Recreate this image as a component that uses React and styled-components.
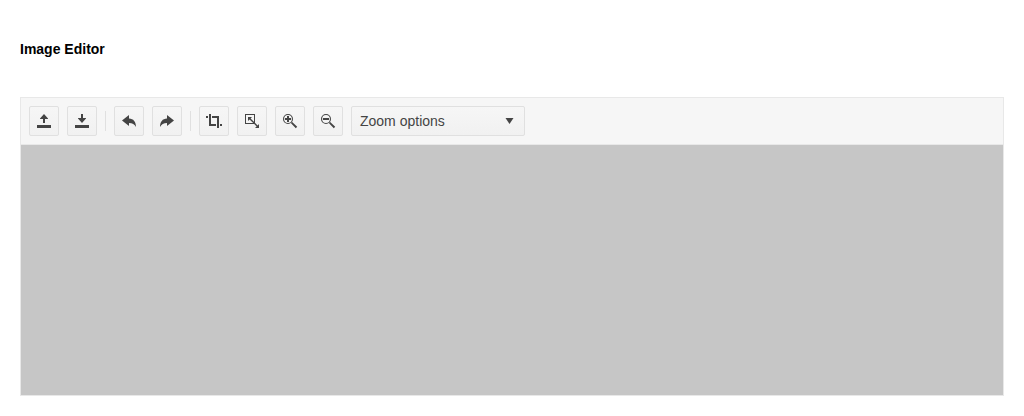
import React from "react";
import styled, { createGlobalStyle } from "styled-components";

const GlobalStyle = createGlobalStyle`
  *, *::before, *::after { box-sizing: border-box; }
  body {
    margin: 0;
    background: #fff;
    color: #000;
    font-family: "Liberation Sans", Arial, sans-serif;
    font-size: 14px;
  }
`;

const Page = styled.main`
  padding: 40px 20px 20px;
`;

const Title = styled.h4`
  margin: 0 0 39px;
  font-size: 14px;
  line-height: 18px;
  font-weight: 700;
`;

const Editor = styled.section`
  border: 1px solid #e8e8e8;
  background: #fff;
`;

const Toolbar = styled.div`
  display: flex;
  align-items: center;
  gap: 8px;
  padding: 8px;
  border-bottom: 1px solid #e8e8e8;
  background: #f6f6f6;
`;

const Button = styled.button`
  display: flex;
  align-items: center;
  justify-content: center;
  width: 30px;
  height: 30px;
  padding: 0;
  border: 1px solid #e0e0e0;
  border-radius: 2px;
  background: linear-gradient(#f6f6f6, #f1f1f1);
  color: #444;
`;

const DropDown = styled(Button)`
  justify-content: space-between;
  width: 174px;
  padding: 0 7px 0 8px;
  font: inherit;
  line-height: 20px;
`;

const Separator = styled.span`
  width: 1px;
  height: 20px;
  background: #e0e0e0;
`;

const Glyph = styled.svg`
  display: block;
  width: 16px;
  height: 16px;
  fill: currentColor;
`;

const Canvas = styled.div`
  height: 250px;
  background: #c6c6c6;
`;

const lens = "M6 1a5 5 0 1 1 0 10A5 5 0 0 1 6 1zM6 2.1a3.9 3.9 0 1 0 0 7.8A3.9 3.9 0 0 0 6 2.1z";
const handle = "M9 10.2L10.2 9 15.2 13.8 13.8 15.2z";

const paths = {
  upload: "M1 12h14v3H1zM8 1l4 4.5V6H9v4H7V6H4v-.5z",
  download: "M1 12h14v3H1zM7 1h2v4h3v.5L8 10 4 5.5V5h3z",
  undo: "M8 2v3.5c4.5 0 7 3.5 7 8.5-1.5-2.7-3.5-4-7-4v3L1 7.5z",
  redo: "M8 2v3.5c-4.5 0-7 3.5-7 8.5 1.5-2.7 3.5-4 7-4v3l7-5.5z",
  crop: "M0 3h2v2H0zM3 1h2v10h5v2H3zM6 3h7v12h-2V5H6zM14 11h2v2h-2z",
  resize:
    "M1 1h10v10H1zM2 2v8h8V2zM4 4h4L6.6 5.4 13.6 12.4 15 11v4h-4l1.6-1.6-7-7L4 8z",
  zoomIn: `${lens}M5 3h2v2h2v2H7v2H5V7H3V5h2z${handle}`,
  zoomOut: `${lens}M3 5h6v2H3z${handle}`,
  caret: "M4.5 5h8l-4 6z",
};

function Icon({ name }) {
  return (
    <Glyph viewBox="0 0 16 16" aria-hidden="true">
      <path d={paths[name]} />
    </Glyph>
  );
}

function Tool({ icon, label }) {
  return (
    <Button type="button" aria-label={label}>
      <Icon name={icon} />
    </Button>
  );
}

export default function App() {
  return (
    <>
      <GlobalStyle />
      <Page>
        <Title>Image Editor</Title>
        <Editor>
          <Toolbar role="toolbar">
            <Tool icon="upload" label="Open" />
            <Tool icon="download" label="Save" />
            <Separator />
            <Tool icon="undo" label="Undo" />
            <Tool icon="redo" label="Redo" />
            <Separator />
            <Tool icon="crop" label="Crop" />
            <Tool icon="resize" label="Resize" />
            <Tool icon="zoomIn" label="Zoom in" />
            <Tool icon="zoomOut" label="Zoom out" />
            <DropDown type="button">
              Zoom options
              <Icon name="caret" />
            </DropDown>
          </Toolbar>
          <Canvas />
        </Editor>
      </Page>
    </>
  );
}
